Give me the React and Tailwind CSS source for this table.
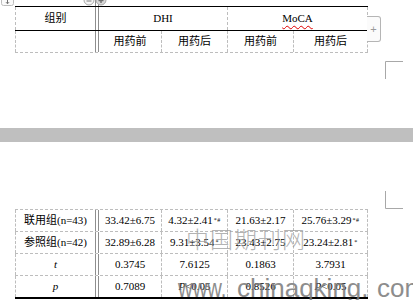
import React from 'react';

const serif = "font-['Liberation_Serif','Noto_Sans_CJK_SC',serif]";
const dash = 'border-dashed border-[#bdbdbd]';

// column widths, x positions taken from the screenshot
const cols = ['w-[63px]', 'w-[66px]', 'w-[66px]', 'w-[74px]'];

const Sep = () => <div className="w-[4px] shrink-0 self-stretch border-x border-[#8e8e8e]" />;

const Cell = ({ w, children, className = '' }) => (
    <div className={`${w} shrink-0 flex items-center justify-center border-r ${dash} ${className}`}>
        {children}
    </div>
);

const Sup = ({ children }) => (
    <sup className="text-[6px] top-[-0.4em] ml-[1px] tracking-[0.5px]">{children}</sup>
);

const bodyRows = [
    { label: '联用组(n=43)', vals: ['33.42±6.75', ['4.32±2.41', '*#'], '21.63±2.17', ['25.76±3.29', '*#']] },
    { label: '参照组(n=42)', vals: ['32.89±6.28', ['9.31±3.54', '*'], '23.43±2.75', ['23.24±2.81', '*']] },
    { label: <i>t</i>, vals: ['0.3745', '7.6125', '0.1863', '3.7931'] },
    { label: <i>p</i>, vals: ['0.7089', <><i>P</i>&lt;0.05</>, '0.8526', <><i>P</i>&lt;0.05</>] },
];

const CornerMark = ({ className, flip }) => (
    <svg className={`absolute ${className}`} width="18" height="18" viewBox="0 0 18 18">
        {flip ? (
            <path d="M0.5 0 V17.5 H18" fill="none" stroke="#a8a8a8" />
        ) : (
            <path d="M0.5 18 V0.5 H18" fill="none" stroke="#a8a8a8" />
        )}
    </svg>
);

export default function App() {
    return (
        <div className={`relative w-[413px] h-[300px] overflow-hidden bg-white text-black ${serif}`}>
            {/* double line stub above the first table */}
            <div className="ml-[95px] w-[4px] h-[6px] border-x border-[#8e8e8e]" />

            {/* header table */}
            <div className="ml-[15px] w-[353px] text-[11px] leading-none">
                <div className={`flex h-[25px] border-y border-black`}>
                    <div className={`w-[80px] shrink-0 flex items-center justify-center border-l ${dash}`}>组别</div>
                    <Sep />
                    <Cell w="w-[129px]">DHI</Cell>
                    <Cell w="w-[140px]">
                        <span className="underline decoration-wavy decoration-[#e00000] decoration-1 underline-offset-[3px]">MoCA</span>
                    </Cell>
                </div>
                <div className={`flex h-[22px] border-b ${dash}`}>
                    <div className={`w-[80px] shrink-0 border-l ${dash}`} />
                    <Sep />
                    {['用药前', '用药后', '用药前', '用药后'].map((t, i) => (
                        <Cell key={i} w={cols[i]}>{t}</Cell>
                    ))}
                </div>
            </div>

            <div className="h-[75px]" />
            <div className="h-[14px] bg-[#bfbfbf]" />
            <div className="h-[67px]" />

            {/* data table */}
            <div className={`ml-[15px] w-[353px] text-[11px] leading-none border-t ${dash}`}>
                {bodyRows.map((r, ri) => {
                    const last = ri === bodyRows.length - 1;
                    return (
                        <div
                            key={ri}
                            className={`flex ${last ? 'h-[23px] border-b-2 border-black' : `h-[22px] border-b ${dash}`}`}
                        >
                            <div className={`w-[80px] shrink-0 flex items-center justify-center border-l ${dash}`}>
                                {r.label}
                            </div>
                            <Sep />
                            {r.vals.map((v, i) => (
                                <Cell key={i} w={cols[i]}>
                                    {Array.isArray(v) ? <span>{v[0]}<Sup>{v[1]}</Sup></span> : v}
                                </Cell>
                            ))}
                        </div>
                    );
                })}
            </div>

            {/* word chrome: handles, add button, margin marks */}
            <svg className="absolute left-[1px] top-0" width="13" height="6" viewBox="0 0 13 6">
                <path d="M0.5 -3 V3.5 Q0.5 5.5 2.5 5.5 H10.5 Q12.5 5.5 12.5 3.5 V-3" fill="#fafafa" stroke="#bdbdbd" />
                <path d="M6.5 0 V3.5 M5 2.2 L6.5 3.8 L8 2.2" fill="none" stroke="#707070" />
            </svg>
            <svg className="absolute left-[83px] top-0" width="24" height="6" viewBox="0 0 24 6">
                <circle cx="6" cy="0" r="5" fill="#f4f4f4" stroke="#a8a8a8" />
                <path d="M3.5 1 H8.5" stroke="#808080" />
                <circle cx="18" cy="0" r="5" fill="#d8d8d8" stroke="#a8a8a8" />
                <path d="M15.5 0.5 H20.5 M18 -2 V3" stroke="#707070" strokeWidth="1.4" />
            </svg>
            <div className="absolute left-[367px] top-[16px] w-[14px] h-[26px] bg-[#fbfbfb] border border-l-0 border-[#b5b5b5] rounded-r-[3px] flex items-center justify-center text-[#9a9a9a] font-['Liberation_Sans',sans-serif] text-[11px] leading-none">
                +
            </div>
            <CornerMark className="left-[385px] top-[61px]" />
            <CornerMark className="left-[385px] top-[191px]" flip />

            {/* watermark */}
            <div className="absolute left-[186px] top-[227px] text-[23px] tracking-[1px] leading-none text-[#9a9a9a] opacity-75 font-['Noto_Sans_CJK_SC',sans-serif] font-light pointer-events-none">
                中国期刊网
            </div>
            <div className="absolute left-[178px] top-[275px] flex text-[26px] leading-none text-[#7a7a7a] opacity-85 font-['Liberation_Sans',sans-serif] whitespace-nowrap pointer-events-none">
                <span className="w-[59px] shrink-0">
                    <span className="inline-block scale-x-[0.78] origin-left">www.</span>
                </span>
                <span className="w-[140px] shrink-0">chinaqking.</span>
                <span>com</span>
            </div>
        </div>
    );
}
